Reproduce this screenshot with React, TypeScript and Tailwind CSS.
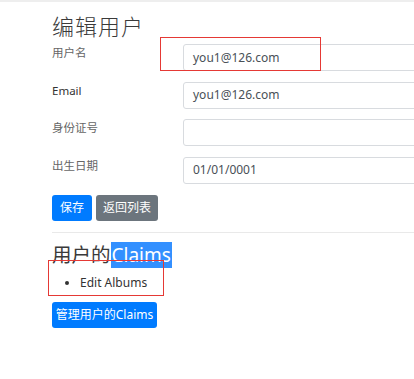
import React from 'react';

const font = { fontFamily: '"Noto Sans", "Noto Sans CJK SC", sans-serif' };

const fields = [
    { label: '用户名', value: 'you1@126.com' },
    { label: 'Email', value: 'you1@126.com' },
    { label: '身份证号', value: '' },
    { label: '出生日期', value: '01/01/0001' },
];

const App = () => {
    return (
        <div className="relative w-[414px] h-[379px] overflow-hidden bg-white" style={font}>
            <div className="h-[2px] bg-[#eeeeee]" />
            <div className="pl-[52px]">
                <h2 className="mt-[10px] text-[22px] leading-[28px] font-light tracking-[1px] text-[#3a3a3a]">编辑用户</h2>

                <div className="mt-[4px] flex flex-col gap-[10.5px]">
                    {fields.map((f) => (
                        <div key={f.label} className="flex items-start">
                            <label className={`w-[131px] shrink-0 pt-[1px] text-[11.5px] leading-[16px] ${f.label === 'Email' ? 'text-[#333]' : 'text-[#666]'}`}>
                                {f.label}
                            </label>
                            <div className="w-[260px] h-[27px] shrink-0 border border-[#d8dbdf] rounded-[3px] px-[9px] flex items-center text-[12px] text-[#495057]">
                                {f.value}
                            </div>
                        </div>
                    ))}
                </div>

                <div className="mt-[11px] flex gap-[4px]">
                    <button className="h-[26px] w-[40px] rounded-[3px] bg-[#007bff] text-white text-[12px]">保存</button>
                    <button className="h-[26px] w-[62px] rounded-[3px] bg-[#6c757d] text-white text-[12px]">返回列表</button>
                </div>

                <div className="mt-[11px] h-px bg-[#e9e9e9]" />

                <h3 className="mt-[9px] flex items-center text-[19.5px] leading-[26px] text-[#3a3a3a]">
                    用户的
                    <span className="bg-[#3390ff] text-white text-[19px] px-[1px]">Claims</span>
                </h3>

                <ul className="mt-[6px] pl-[28px] list-disc text-[12px] leading-[18px] text-[#333]">
                    <li>Edit Albums</li>
                </ul>

                <button className="mt-[10px] h-[26px] w-[105px] rounded-[3px] bg-[#007bff] text-white text-[12px]">管理用户的Claims</button>
            </div>

            <div className="absolute left-[160px] top-[37px] w-[161px] h-[34px] border border-[#e53935]" />
            <div className="absolute left-[48px] top-[260px] w-[116px] h-[36px] border border-[#e53935]" />
        </div>
    );
};

export default App;
